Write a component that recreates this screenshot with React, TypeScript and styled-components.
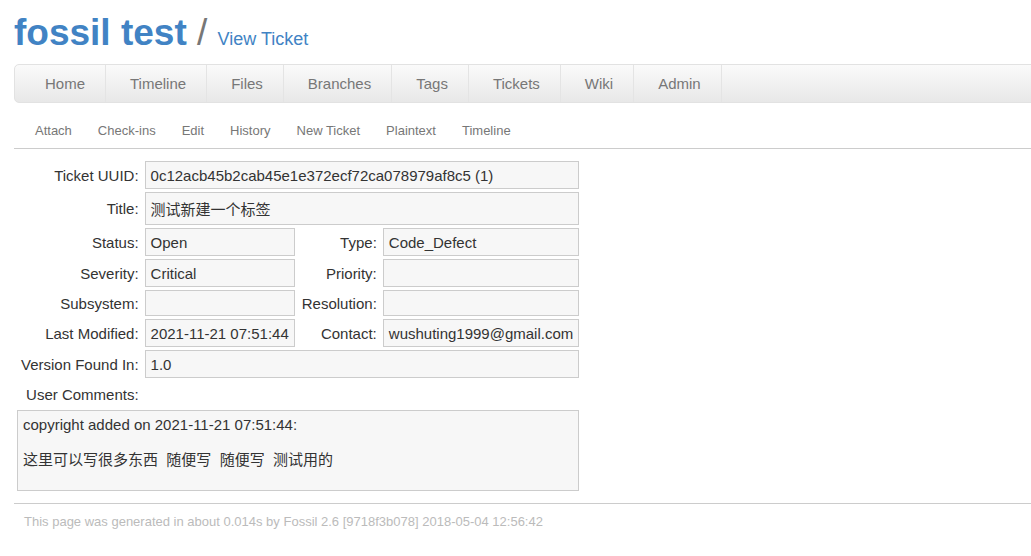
import styled, { createGlobalStyle } from "styled-components";

const GlobalStyle = createGlobalStyle`
  html, body {
    margin: 0;
    padding: 0;
    background: #fff;
    overflow: hidden;
  }
  body {
    font-family: "Liberation Sans", "Noto Sans CJK SC", sans-serif;
    font-size: 15px;
    color: #333;
  }
`

const mainMenu = ["Home", "Timeline", "Files", "Branches", "Tags", "Tickets", "Wiki", "Admin"];
const subMenu = ["Attach", "Check-ins", "Edit", "History", "New Ticket", "Plaintext", "Timeline"];

const App = () => {
    return (
        <>
            <GlobalStyle/>
            <Page>
                <Header>
                    <ProjectName>fossil test</ProjectName>
                    <Slash> / </Slash>
                    <PageTitle>View Ticket</PageTitle>
                </Header>

                <MainMenu>
                    {mainMenu.map(item => <MenuLink key={item}>{item}</MenuLink>)}
                </MainMenu>

                <SubMenu>
                    {subMenu.map(item => <SubLink key={item}>{item}</SubLink>)}
                </SubMenu>

                <TicketTable>
                    <tbody>
                    <tr>
                        <Label>Ticket UUID:</Label>
                        <Value colSpan={3}>0c12acb45b2cab45e1e372ecf72ca078979af8c5 (1)</Value>
                    </tr>
                    <tr>
                        <Label>Title:</Label>
                        <Value colSpan={3} $tall>测试新建一个标签</Value>
                    </tr>
                    <tr>
                        <Label>Status:</Label>
                        <Value>Open</Value>
                        <Label>Type:</Label>
                        <Value>Code_Defect</Value>
                    </tr>
                    <tr>
                        <Label>Severity:</Label>
                        <Value>Critical</Value>
                        <Label>Priority:</Label>
                        <Value></Value>
                    </tr>
                    <tr>
                        <Label>Subsystem:</Label>
                        <Value></Value>
                        <Label>Resolution:</Label>
                        <Value></Value>
                    </tr>
                    <tr>
                        <Label>Last Modified:</Label>
                        <Value>2021-11-21 07:51:44</Value>
                        <Label>Contact:</Label>
                        <Value>wushuting1999@gmail.com</Value>
                    </tr>
                    <tr>
                        <Label>Version Found In:</Label>
                        <Value colSpan={3}>1.0</Value>
                    </tr>
                    <tr>
                        <Label>User Comments:</Label>
                    </tr>
                    <tr>
                        <Value colSpan={4}>
                            <div>copyright added on 2021-11-21 07:51:44:</div>
                            <CommentBody>这里可以写很多东西{"\u00a0 "}随便写{"\u00a0 "}随便写{"\u00a0 "}测试用的</CommentBody>
                        </Value>
                    </tr>
                    </tbody>
                </TicketTable>

                <Footer>
                    This page was generated in about 0.014s by Fossil 2.6 [9718f3b078] 2018-05-04 12:56:42
                </Footer>
            </Page>
        </>
    );
};

export default App;

const Page = styled.div`
  padding-left: 14px;
  overflow: hidden;
`

const Header = styled.div`
  padding-top: 12px;
  margin-bottom: 10px;
  color: #4183c4;
  white-space: pre;
`

const ProjectName = styled.span`
  font-size: 37px;
  font-weight: 700;
`

const Slash = styled.span`
  font-size: 37px;
  color: #777;
`

const PageTitle = styled.span`
  font-size: 18px;
`

const MainMenu = styled.nav`
  display: flex;
  margin-right: -12px;
  padding-left: 6px;
  background: linear-gradient(#fafafa, #e8e8e8);
  border: 1px solid #e2e2e2;
  border-radius: 5px;
  white-space: nowrap;
`

const MenuLink = styled.a`
  margin-left: 4px;
  padding: 10px 20px;
  border-right: 1px solid #e4e4e4;
  color: #777;
  font-size: 15px;
  line-height: 17px;
  text-decoration: none;
`

const SubMenu = styled.nav`
  display: flex;
  margin-top: 10px;
  margin-right: -12px;
  padding-left: 8px;
  border-bottom: 1px solid #ccc;
`

const SubLink = styled.a`
  padding: 10px 13px;
  color: #777;
  font-size: 13px;
  line-height: 15px;
  text-decoration: none;
`

const TicketTable = styled.table`
  margin-top: 9px;
  border-collapse: separate;
  border-spacing: 3px;
`

const Label = styled.th`
  padding: 4.5px 3px 4.5px 4px;
  text-align: right;
  font-weight: 400;
  white-space: nowrap;
  color: #333;
`

const Value = styled.td<{ $tall?: boolean }>`
  padding: ${p => (p.$tall ? "5px 5px" : "4.5px 5px")};
  background: #f7f7f7;
  border: 1px solid #ccc;
  white-space: nowrap;
  color: #333;
`

const CommentBody = styled.p`
  margin: 15px 0 17px;
`

const Footer = styled.div`
  margin-top: 9px;
  margin-right: -12px;
  padding: 10px 10px;
  border-top: 1px solid #ccc;
  color: #bbb;
  font-size: 13px;
  line-height: 15px;
`
